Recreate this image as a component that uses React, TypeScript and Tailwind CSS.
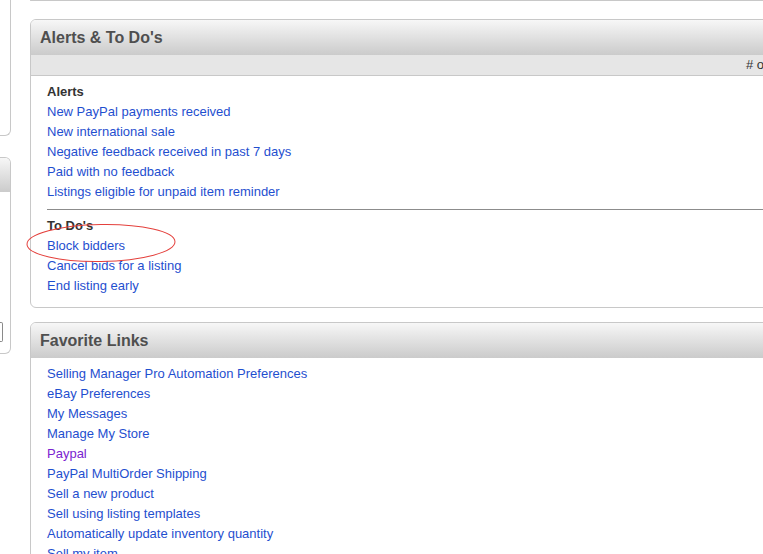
import React from 'react';

const alerts = [
  'New PayPal payments received',
  'New international sale',
  'Negative feedback received in past 7 days',
  'Paid with no feedback',
  'Listings eligible for unpaid item reminder',
];

const todos = ['Block bidders', 'Cancel bids for a listing', 'End listing early'];

const favorites = [
  { label: 'Selling Manager Pro Automation Preferences' },
  { label: 'eBay Preferences' },
  { label: 'My Messages' },
  { label: 'Manage My Store' },
  { label: 'Paypal', visited: true },
  { label: 'PayPal MultiOrder Shipping' },
  { label: 'Sell a new product' },
  { label: 'Sell using listing templates' },
  { label: 'Automatically update inventory quantity' },
  { label: 'Sell my item' },
  { label: 'Sell similar' },
];

function PanelHeader({ title }: { title: string }) {
  return (
    <div className="h-[35px] flex items-center pl-[9px] rounded-t-[5px] bg-linear-to-b from-[#f7f7f7] to-[#cbcbcb] text-[16px] font-bold text-[#4f4f4f]">
      {title}
    </div>
  );
}

function LinkRow({ children, visited }: { children: React.ReactNode; visited?: boolean }) {
  return (
    <a href="#" className={`block h-5 leading-5 ${visited ? 'text-[#7a24d0]' : 'text-[#1f4fcf]'}`}>
      {children}
    </a>
  );
}

export default function App() {
  return (
    <div
      className="relative w-[763px] h-[554px] overflow-hidden bg-white flex text-[13px]"
      style={{ fontFamily: '"Liberation Sans", Arial, sans-serif' }}
    >
      {/* left column, mostly off screen */}
      <div className="w-[11px] shrink-0 flex flex-col">
        <div className="h-[136px] border-r border-b border-[#c8c8c8] rounded-br-[6px]" />
        <div className="mt-[21px] h-[197px] border-t border-r border-b border-[#c8c8c8] rounded-r-[6px] flex flex-col">
          <div className="h-[34px] rounded-tr-[5px] bg-linear-to-b from-[#f7f7f7] to-[#cbcbcb]" />
          <div className="mt-[130px] w-[3px] h-[20px] border-r border-t border-b border-[#8a8a8a] rounded-r-[2px]" />
        </div>
      </div>

      {/* main column */}
      <div className="ml-[19px] w-[800px] shrink-0 flex flex-col">
        <div className="h-[4px] border-x border-b border-[#c8c8c8] rounded-b-[6px]" />

        <div className="mt-[18px] border border-[#c8c8c8] rounded-[6px]">
          <PanelHeader title="Alerts & To Do's" />
          <div className="h-[21px] bg-[#e6e6e6] border-b border-[#c8c8c8] pl-[715px] leading-5 text-[#333]">
            # of items
          </div>
          <div className="pl-4 pt-[6px] pb-[11px]">
            <div className="h-5 leading-5 font-bold text-[#333]">Alerts</div>
            {alerts.map((a) => (
              <LinkRow key={a}>{a}</LinkRow>
            ))}
            <div className="mt-[7px] mb-[6px] h-px bg-[#8c8c8c]" />
            <div className="h-5 leading-5 font-bold text-[#333]">To Do's</div>
            {todos.map((t) => (
              <LinkRow key={t}>{t}</LinkRow>
            ))}
          </div>
        </div>

        <div className="mt-[14px] border border-[#c8c8c8] rounded-[6px]">
          <PanelHeader title="Favorite Links" />
          <div className="pl-4 pt-[6px] pb-[10px]">
            {favorites.map((f) => (
              <LinkRow key={f.label} visited={f.visited}>
                {f.label}
              </LinkRow>
            ))}
          </div>
        </div>
      </div>

      {/* hand-drawn annotation */}
      <svg className="absolute left-[25px] top-[222px]" width="154" height="42" viewBox="0 0 154 42">
        <ellipse cx="76" cy="21" rx="74" ry="18.5" fill="none" stroke="#e4403c" strokeWidth="1" transform="rotate(-1 76 21)" />
      </svg>
    </div>
  );
}
